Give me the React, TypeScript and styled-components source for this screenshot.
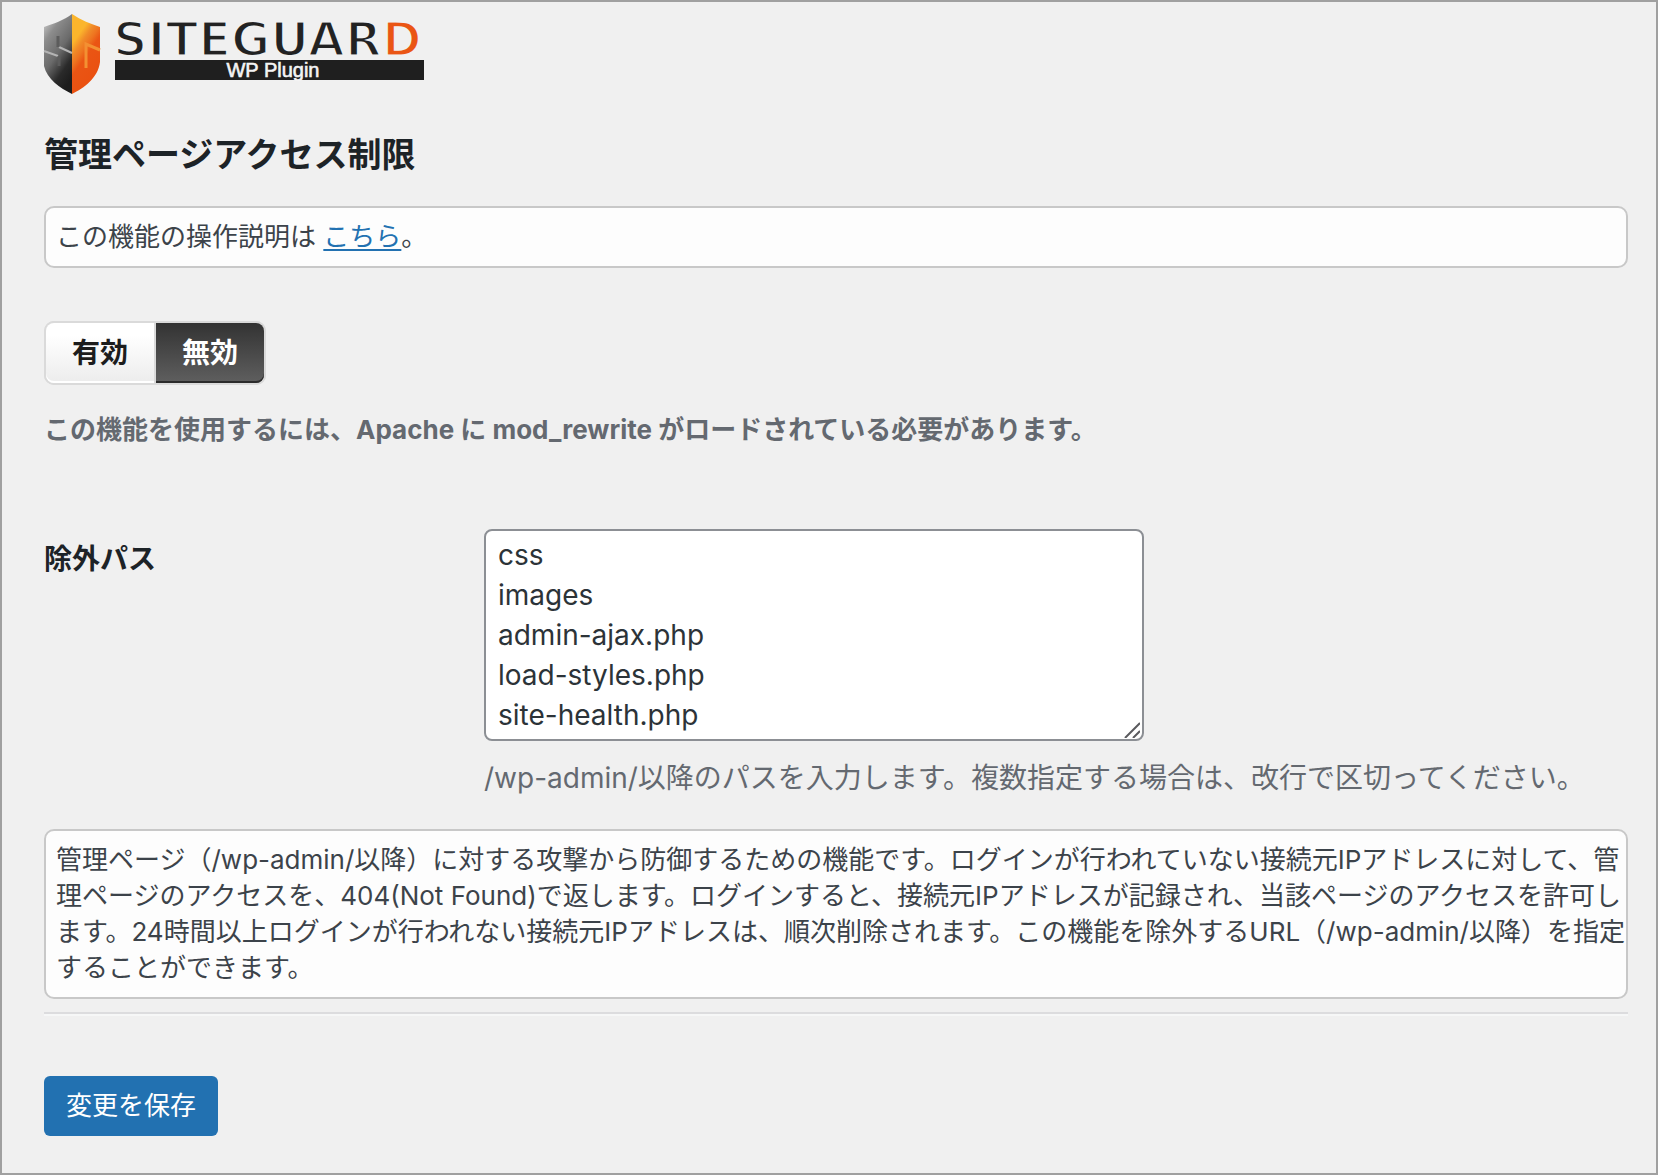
import React, { useState } from "react";
import styled, { createGlobalStyle } from "styled-components";

const sans = `Inter, "Noto Sans CJK JP", sans-serif`;
const surface = "#f0f0f0";

const GlobalStyle = createGlobalStyle`
  *, *::before, *::after { box-sizing: border-box; }
  html, body { margin: 0; padding: 0; }
  body {
    background: ${surface};
    color: #3c434a;
    font-family: ${sans};
    font-size: 26px;
    line-height: 36px;
  }
`;

const Page = styled.main`
  min-height: 100vh;
  padding: 12px 28px 36px 42px;
  border: 2px solid #a0a0a0;
  background: ${surface};
`;

const Logo = styled.svg`
  display: block;
  overflow: visible;
`;

const Title = styled.h1`
  margin: 39px 0 29px;
  color: #1d2327;
  font-size: 34px;
  font-weight: 700;
  line-height: 44px;
`;

const Panel = styled.p`
  margin: 0;
  padding: 11px 0 11px 10px;
  border: 2px solid #c8c8c8;
  border-radius: 10px;
  background: #fdfdfd;
`;

const Link = styled.a`
  color: #2271b1;
  text-decoration: underline;
  text-decoration-thickness: 2px;
  text-underline-offset: 3px;
`;

const Switch = styled.fieldset`
  display: flex;
  gap: 2px;
  width: max-content;
  margin: 53px 0 27px;
  padding: 0;
  border: 2px solid #dadada;
  border-radius: 10px;
  background: #dadada;
`;

const Choice = styled.label<{ $on: boolean; $side: "left" | "right" }>`
  padding: 10px 26px;
  border-radius: ${(p) => (p.$side === "left" ? "8px 0 0 8px" : "0 8px 8px 0")};
  background: ${(p) =>
    p.$on
      ? "linear-gradient(#333333, #5f5f5f)"
      : "linear-gradient(#ffffff 20%, #ececec)"};
  box-shadow: inset 0 -2px 0 ${(p) => (p.$on ? "#2b2b2b" : "#ffffff")};
  color: ${(p) => (p.$on ? "#ffffff" : "#1d1d1d")};
  font-size: 28px;
  font-weight: 700;
  line-height: 40px;
  cursor: pointer;
`;

const HiddenRadio = styled.input`
  position: absolute;
  opacity: 0;
  pointer-events: none;
`;

const Note = styled.p`
  margin: 0;
  color: #646970;
  font-weight: 700;
`;

const Field = styled.div`
  display: grid;
  grid-template-columns: 440px minmax(0, 1fr);
  margin: 81px 0 31px;
`;

const FieldLabel = styled.label`
  padding-top: 10px;
  color: #1d2327;
  font-size: 28px;
  font-weight: 700;
  line-height: 40px;
`;

const PathBox = styled.div`
  position: relative;
  width: max-content;
  max-width: 100%;
`;

const PathList = styled.textarea`
  display: block;
  width: 660px;
  max-width: 100%;
  padding: 4px 12px;
  overflow: hidden;
  border: 2px solid #8c8f94;
  border-radius: 8px;
  background: #ffffff;
  color: #2c3338;
  font-family: ${sans};
  font-size: 28px;
  line-height: 40px;
  resize: both;

  &::-webkit-resizer {
    background: transparent;
  }
`;

const Grip = styled.svg`
  position: absolute;
  right: 4px;
  bottom: 3px;
  pointer-events: none;
`;

const Hint = styled.p`
  margin: 17px 0 0;
  color: #646970;
  font-size: 28px;
  line-height: 40px;
`;

const Divider = styled.hr`
  margin: 13px 0 60px;
  border: 0;
  border-top: 2px solid #dcdcde;
  border-bottom: 2px solid #f6f7f7;
`;

const SaveButton = styled.button`
  padding: 12px 22px;
  border: 0;
  border-radius: 6px;
  background: #2271b1;
  color: #ffffff;
  font-family: ${sans};
  font-size: 26px;
  line-height: 36px;
  cursor: pointer;
`;

const paths = ["css", "images", "admin-ajax.php", "load-styles.php", "site-health.php"];

function SiteGuardLogo() {
  return (
    <Logo width="380" height="80" viewBox="0 0 380 80" role="img" aria-label="SITEGUARD WP Plugin">
      <defs>
        <linearGradient id="steel" x1="0.1" y1="0" x2="0.6" y2="1">
          <stop offset="0" stopColor="#d0d0d0" />
          <stop offset="0.25" stopColor="#8c8c8c" />
          <stop offset="0.55" stopColor="#6a6a6a" />
          <stop offset="0.8" stopColor="#2a2a2a" />
          <stop offset="1" stopColor="#1c1c1c" />
        </linearGradient>
        <linearGradient id="ember" x1="0" y1="0" x2="0.5" y2="1">
          <stop offset="0" stopColor="#fbb52c" />
          <stop offset="0.3" stopColor="#fbb52c" />
          <stop offset="0.42" stopColor="#f08a28" />
          <stop offset="0.52" stopColor="#ee7420" />
          <stop offset="0.62" stopColor="#ea5514" />
          <stop offset="1" stopColor="#ea5010" />
        </linearGradient>
      </defs>
      <path d="M28 0 C20 6 9 10 0 13 V52 C3 65 16 74 28 80 Z" fill="url(#steel)" />
      <path d="M28 0 C37 6 47 10 56 13 V48 C54 64 40 74 28 80 Z" fill="url(#ember)" />
      <path d="M42 54 V30 L56 36" fill="none" stroke="#f39032" strokeWidth="3" />
      <path d="M0 37 L14 42 M15 33 L28 39" fill="none" stroke="#b4b4b4" strokeWidth="2" />
      <path d="M15 42 V52 M14 22 V33" fill="none" stroke="#5c5c5c" strokeWidth="3" />
      <text
        x="69"
        y="42"
        fontFamily="DejaVu Sans"
        fontSize="48"
        fontWeight="700"
        fill="#222222"
        stroke={surface}
        strokeWidth="3"
      >
        SITEGUAR<tspan fill="#ea5514">D</tspan>
      </text>
      <rect x="71" y="46" width="309" height="20" fill="#1f1f1f" />
      <text
        x="229"
        y="63"
        textAnchor="middle"
        fontFamily="Liberation Sans"
        fontSize="20"
        fill="#f4f4f4"
        stroke="#f4f4f4"
        strokeWidth="0.6"
      >
        WP Plugin
      </text>
    </Logo>
  );
}

export default function App() {
  const [enabled, setEnabled] = useState(false);
  const [excluded, setExcluded] = useState(paths.join("\n"));

  return (
    <>
      <GlobalStyle />
      <Page>
        <SiteGuardLogo />
        <Title>管理ページアクセス制限</Title>
        <Panel>
          この機能の操作説明は <Link href="#guide">こちら</Link>。
        </Panel>
        <form onSubmit={(e) => e.preventDefault()}>
          <Switch aria-label="管理ページアクセス制限">
            <Choice $on={enabled} $side="left">
              <HiddenRadio type="radio" name="enable" checked={enabled} onChange={() => setEnabled(true)} />
              有効
            </Choice>
            <Choice $on={!enabled} $side="right">
              <HiddenRadio type="radio" name="enable" checked={!enabled} onChange={() => setEnabled(false)} />
              無効
            </Choice>
          </Switch>
          <Note>この機能を使用するには、Apache に mod_rewrite がロードされている必要があります。</Note>
          <Field>
            <FieldLabel htmlFor="exclude-path">除外パス</FieldLabel>
            <div>
              <PathBox>
                <PathList
                  id="exclude-path"
                  rows={5}
                  value={excluded}
                  onChange={(e) => setExcluded(e.target.value)}
                />
                <Grip width="16" height="16" viewBox="0 0 16 16" aria-hidden="true">
                  <path d="M1 16 L16 1 M9 16 L16 9" fill="none" stroke="#5a5a5e" strokeWidth="2" />
                </Grip>
              </PathBox>
              <Hint>/wp-admin/以降のパスを入力します。複数指定する場合は、改行で区切ってください。</Hint>
            </div>
          </Field>
          <Panel>
            管理ページ（/wp-admin/以降）に対する攻撃から防御するための機能です。ログインが行われていない接続元IPアドレスに対して、管
            <br />
            理ページのアクセスを、404(Not Found)で返します。ログインすると、接続元IPアドレスが記録され、当該ページのアクセスを許可し
            <br />
            ます。24時間以上ログインが行われない接続元IPアドレスは、順次削除されます。この機能を除外するURL（/wp-admin/以降）を指定
            <br />
            することができます。
          </Panel>
          <Divider />
          <SaveButton type="submit">変更を保存</SaveButton>
        </form>
      </Page>
    </>
  );
}
